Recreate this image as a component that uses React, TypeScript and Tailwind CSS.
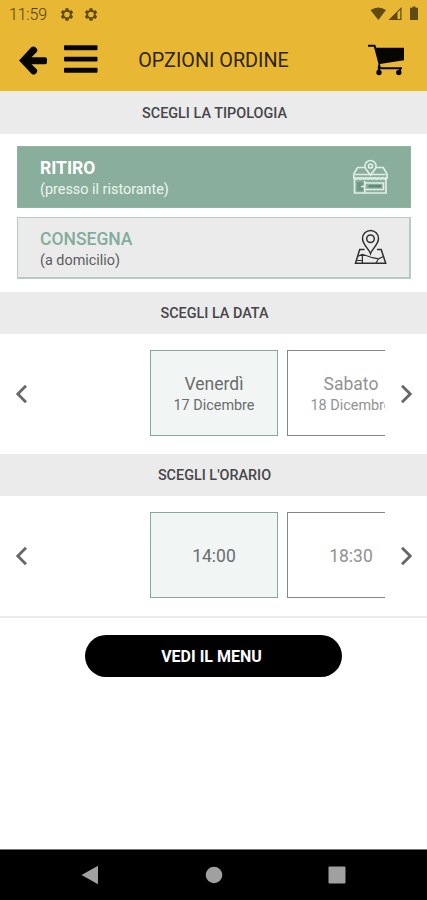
import type { ReactNode } from "react";

function SectionTitle({ children }: { children: ReactNode }) {
  return (
    <h2 className="flex h-[42px] shrink-0 items-center justify-center bg-[#ebebeb] pl-[2px] pt-px text-[14.4px] font-medium leading-5 text-[#46464a]">
      {children}
    </h2>
  );
}

function Gear() {
  return (
    <svg className="h-[15px] w-[16px]" viewBox="0 0 24 24" fill="#5e4a13" fillRule="evenodd">
      <path d="M19.43 12.98c.04-.32.07-.64.07-.98s-.03-.66-.07-.98l2.11-1.65c.19-.15.24-.42.12-.64l-2-3.46c-.12-.22-.39-.3-.61-.22l-2.49 1c-.52-.4-1.08-.73-1.69-.98l-.38-2.65C14.46 2.18 14.25 2 14 2h-4c-.25 0-.46.18-.49.42l-.38 2.65c-.61.25-1.17.59-1.69.98l-2.49-1c-.23-.09-.49 0-.61.22l-2 3.46c-.13.22-.07.49.12.64l2.11 1.65c-.04.32-.07.65-.07.98s.03.66.07.98l-2.11 1.65c-.19.15-.24.42-.12.64l2 3.46c.12.22.39.3.61.22l2.49-1c.52.4 1.08.73 1.69.98l.38 2.65c.03.24.24.42.49.42h4c.25 0 .46-.18.49-.42l.38-2.65c.61-.25 1.17-.59 1.69-.98l2.49 1c.23.09.49 0 .61-.22l2-3.46c.12-.22.07-.49-.12-.64l-2.11-1.65zM12 16.500a4.500 4.500 0 1 1 0-9 4.500 4.500 0 0 1 0 9z" />
    </svg>
  );
}

function StatusBar() {
  return (
    <div className="flex h-7 items-center pl-[9px] pr-[8px]">
      <span className="w-[49px] pt-px text-[16px] font-light leading-4 tracking-[-0.2px] text-[#4f3d0c]">11:59</span>
      <span className="ml-px flex gap-2">
        <Gear />
        <Gear />
      </span>
      <svg className="ml-auto h-[16px] w-[50px]" viewBox="0 0 50 16" fill="#5e4a13">
        <path d="M1.500 4Q9.500 -1 17 4L9.300 14Z" />
        <path d="M19.500 14 32.500 1V14Z M28.500 6.500V13H31.300V3.700Z" fillRule="evenodd" />
        <path d="M43.500 1.800V.5h3v1.300h2.500V14h-8V1.800Z" />
      </svg>
    </div>
  );
}

function Header() {
  return (
    <div className="relative flex h-[63px] items-center justify-between pl-[18px] pr-[22px]">
      <div className="flex items-center gap-[17px]">
        <svg className="h-[30px] w-[29px]" viewBox="0 0 29 30" fill="#080601">
          <path d="M1 15.500 13.500 2Q15.500 .8 17.500 2.300L19 4Q20 5.500 18.500 7.200L13.500 12.200H27Q29 12.200 29 14V17.500Q29 19.300 27 19.300H13.500L18.500 24Q20 25.700 18.700 27.500L17.500 29Q15.500 30.300 13.500 28.700Z" />
        </svg>
        <svg className="h-[30px] w-[34px]" viewBox="0 0 34 30" fill="#080601">
          <rect x="0" y=".3" width="33.500" height="5" rx="0.800" />
          <rect x="0" y="11.700" width="33.500" height="4.700" rx="0.800" />
          <rect x="0" y="22.800" width="33.500" height="4.900" rx="0.800" />
        </svg>
      </div>
      <h1 className="absolute inset-x-0 pt-[2px] text-center text-[19.800px] leading-6 text-[#2d240b]">OPZIONI ORDINE</h1>
      <svg className="h-[32px] w-[37px]" viewBox="0 0 37 32" fill="#080601">
        <path d="M0 .7H7.200L8.300 3.700H36V16.300L12 20 12.700 23.300H34V25.300H33V28H31V25.300H12V28H9.800V22.700L10.500 20 5.900 2.800H0Z" />
        <circle cx="11" cy="28.500" r="2.700" />
        <circle cx="30.800" cy="28.500" r="2.700" />
      </svg>
    </div>
  );
}

function StoreIcon() {
  return (
    <svg className="h-[36px] w-[36px]" viewBox="0 0 36 36" fill="none" stroke="#e1eee6" strokeWidth="1.700">
      <path d="M13 8.500H5.500L1.800 15V19H35V15L31.300 8.500H23M2.500 19V34H34V19M3 15.500H33.500" />
      <path d="M2 19q2 2.500 4.100 0 2 2.500 4.100 0 2 2.500 4.100 0 2 2.500 4.200 0 2 2.500 4.100 0 2 2.500 4.200 0 2 2.500 4.100 0 2 2.500 4.200 0" />
      <path d="M18.500 16 14 10.200A5.500 5.500 0 1 1 23 10.200Z" fill="#89ae9b" />
      <circle cx="18.500" cy="7" r="2" />
      <path d="M12.800 22V34M13.500 24H31.500V30.500H13.500" />
      <path d="M5.500 23.500H10.500V31.500H5.500Z" fill="#729683" stroke="#729683" strokeWidth="1" />
      <path d="M9 27.500H12" strokeWidth="1.500" />
      <path d="M16.500 27.200H29.500" stroke="#668879" strokeWidth="2.500" />
    </svg>
  );
}

function MapIcon() {
  return (
    <svg className="mb-[2px] h-[36px] w-[36px]" viewBox="0 0 36 36" fill="none" stroke="#303030" strokeWidth="1.500">
      <path d="M12.500 20.500H7.700L3.500 34.200H33.700L29.200 20.500H25" />
      <path d="M5.500 27.500 10.200 25.300 20.500 28.700 26.500 29.800 31.500 27.500M10.400 25.300V34M26.500 29.800 24 34M4.500 31.500H10.400" strokeWidth="1.200" />
      <path d="M18.500 24.500C17.300 20.500 10.500 15.500 10.500 9.500A8 8 0 0 1 26.500 9.500C26.500 15.500 19.700 20.500 18.500 24.500Z" fill="#ebebeb" />
      <circle cx="18.500" cy="9.700" r="3.800" />
    </svg>
  );
}

function Arrow({ direction }: { direction: "left" | "right" }) {
  return (
    <svg className="h-[20px] w-[12px]" viewBox="0 0 12 20" fill="none" stroke="#68686b" strokeWidth="2.800">
      <path d={direction === "left" ? "M11 1.800 2.800 10 11 18.200" : "M2 1.800 10.200 10 2 18.200"} />
    </svg>
  );
}

function Slot({ selected, children }: { selected?: boolean; children: ReactNode }) {
  return (
    <button
      className={
        "flex h-[86px] w-32 shrink-0 flex-col items-center justify-center border pt-[3px] " +
        (selected ? "border-[#83aa9a] bg-[#f1f6f5] text-[#696d6d]" : "border-[#858587] bg-white text-[#929293]")
      }
    >
      {children}
    </button>
  );
}

function Carousel({ children }: { children: ReactNode }) {
  return (
    <div className="flex h-[120px] shrink-0 items-center px-[15px] pb-[2px]">
      <button aria-label="Precedente" className="pt-px">
        <Arrow direction="left" />
      </button>
      <div className="mx-[15px] flex min-w-0 flex-1 gap-[9px] overflow-hidden pl-[108px]">{children}</div>
      <button aria-label="Successivo" className="pt-px">
        <Arrow direction="right" />
      </button>
    </div>
  );
}

export default function App() {
  return (
    <main className="flex h-[900px] w-[427px] flex-col overflow-hidden bg-white font-['Roboto',sans-serif]">
      <header className="h-[91px] shrink-0 bg-[#e8b835]">
        <StatusBar />
        <Header />
      </header>
      <div className="h-px shrink-0 bg-[#f3ead2]" />
      <SectionTitle>SCEGLI LA TIPOLOGIA</SectionTitle>
      <section className="flex h-[158px] shrink-0 flex-col gap-[9px] pl-[17px] pr-4 pt-[12px]">
        <button className="flex h-[62px] items-center justify-between border border-[#91b5a5] bg-[#89ae9b] pl-[22px] pr-[22px] text-left">
          <span className="flex flex-col pt-[3px]">
            <b className="text-[17.500px] font-bold leading-[21px] text-white">RITIRO</b>
            <span className="text-[14.400px] leading-[21px] text-[#edf5f0]">(presso il ristorante)</span>
          </span>
          <StoreIcon />
        </button>
        <button className="flex h-[62px] items-center justify-between border border-b-2 border-r-2 border-[#b3cdc2] bg-[#ebebeb] pl-[22px] pr-[21px] text-left">
          <span className="flex flex-col pt-[5px]">
            <b className="text-[17.500px] font-medium leading-[21px] text-[#82ad9b]">CONSEGNA</b>
            <span className="text-[14.400px] leading-[21px] text-[#5c5c5e]">(a domicilio)</span>
          </span>
          <MapIcon />
        </button>
      </section>
      <SectionTitle>SCEGLI LA DATA</SectionTitle>
      <Carousel>
        <Slot selected>
          <span className="text-[17.500px] leading-[21px]">Venerdì</span>
          <span className="text-[14.400px] leading-[21px]">17 Dicembre</span>
        </Slot>
        <Slot>
          <span className="text-[17.500px] leading-[21px]">Sabato</span>
          <span className="text-[14.400px] leading-[21px]">18 Dicembre</span>
        </Slot>
      </Carousel>
      <SectionTitle>SCEGLI L'ORARIO</SectionTitle>
      <Carousel>
        <Slot selected>
          <span className="text-[17.500px]">14:00</span>
        </Slot>
        <Slot>
          <span className="text-[17.500px]">18:30</span>
        </Slot>
      </Carousel>
      <section className="flex flex-1 flex-col items-center border-t-2 border-[#ebebeb] pt-[17px]">
        <button className="h-[42px] w-[257px] rounded-full bg-black pr-1 pt-px text-[16px] font-bold text-white">
          VEDI IL MENU
        </button>
      </section>
      <nav className="flex h-[51px] shrink-0 items-center justify-between border-t border-[#777] bg-black px-[81px] pb-px">
        <svg className="h-[20px] w-[18px]" viewBox="0 0 18 20" fill="#a0a0a0">
          <path d="M.5 10 17 .8V19.200Z" />
        </svg>
        <svg className="h-[18px] w-[18px]" viewBox="0 0 18 18" fill="#a0a0a0">
          <circle cx="9" cy="9" r="8.300" />
        </svg>
        <svg className="h-[18px] w-[18px]" viewBox="0 0 18 18" fill="#a0a0a0">
          <rect x=".5" y=".5" width="17" height="17" rx="1" />
        </svg>
      </nav>
    </main>
  );
}
